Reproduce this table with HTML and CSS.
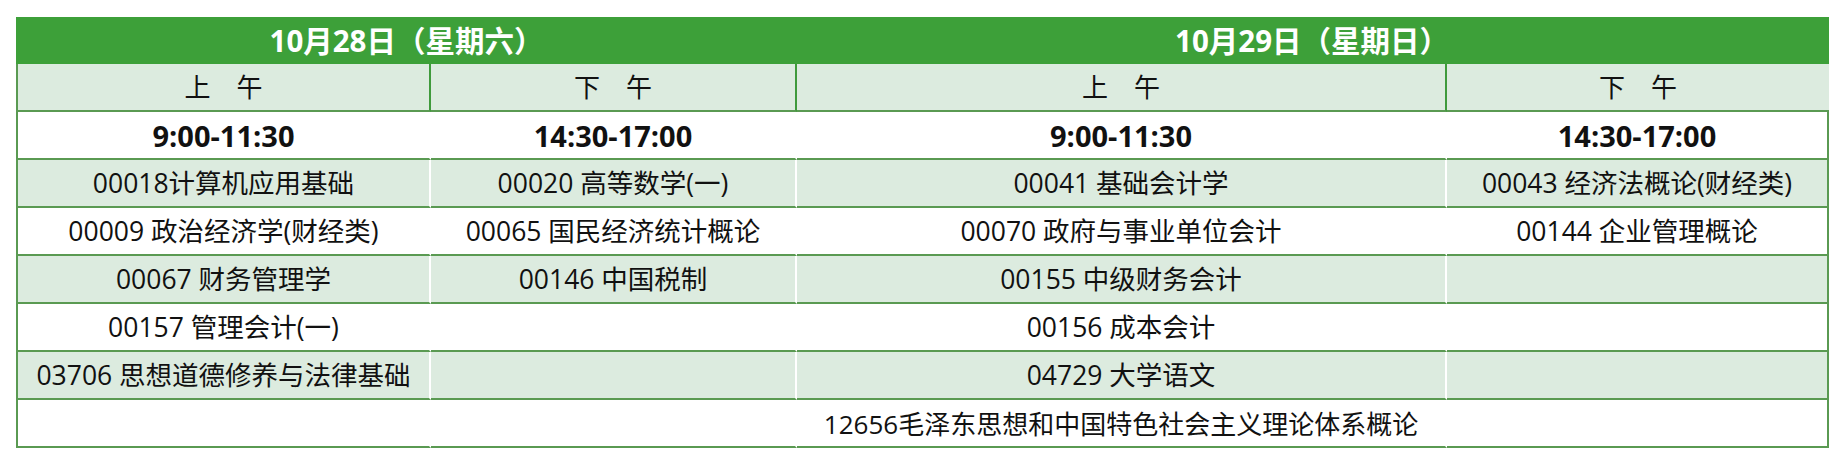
FILE: index.html
```html
<!DOCTYPE html>
<html lang="zh-CN">
<head>
<meta charset="utf-8">
<title>考试安排</title>
<link rel="stylesheet" href="styles.css">
</head>
<body>
<table class="sched">
  <colgroup>
    <col class="c1"><col class="c2"><col class="c3"><col class="c4">
  </colgroup>
  <tr class="day">
    <th colspan="2">10月28日（星期六）</th>
    <th colspan="2">10月29日（星期日）</th>
  </tr>
  <tr class="half">
    <td>上　午</td><td>下　午</td><td>上　午</td><td class="last">下　午</td>
  </tr>
  <tr class="time">
    <td>9:00-11:30</td><td>14:30-17:00</td><td>9:00-11:30</td><td class="last">14:30-17:00</td>
  </tr>
  <tr class="row alt">
    <td>00018计算机应用基础</td><td>00020 高等数学(一)</td><td>00041 基础会计学</td><td class="last">00043 经济法概论(财经类)</td>
  </tr>
  <tr class="row">
    <td>00009 政治经济学(财经类)</td><td>00065 国民经济统计概论</td><td>00070 政府与事业单位会计</td><td class="last">00144 企业管理概论</td>
  </tr>
  <tr class="row alt">
    <td>00067 财务管理学</td><td>00146 中国税制</td><td>00155 中级财务会计</td><td class="last"></td>
  </tr>
  <tr class="row">
    <td>00157 管理会计(一)</td><td></td><td>00156 成本会计</td><td class="last"></td>
  </tr>
  <tr class="row alt">
    <td>03706 思想道德修养与法律基础</td><td></td><td>04729 大学语文</td><td class="last"></td>
  </tr>
  <tr class="row">
    <td></td><td></td><td class="long">12656毛泽东思想和中国特色社会主义理论体系概论</td><td class="last"></td>
  </tr>
</table>
</body>
</html>
```

FILE: styles.css
```css
html, body {
  margin: 0;
  padding: 0;
  background: #ffffff;
}

body {
  padding: 17px 0 0 16px;
  font-family: "Open Sans", "Noto Sans CJK SC", sans-serif;
  color: #111111;
}

.sched {
  table-layout: fixed;
  width: 1813px;
  border-collapse: separate;
  border-spacing: 0;
}

.c1 { width: 415px; }
.c2 { width: 366px; }
.c3 { width: 650px; }
.c4 { width: 382px; }

.sched th,
.sched td {
  padding: 0;
  text-align: center;
  vertical-align: middle;
  white-space: nowrap;
  overflow: hidden;
  line-height: 1;
}

.day { height: 47px; }

.day th {
  background: #3da039;
  color: #ffffff;
  font-size: 29.5px;
  font-weight: 700;
  padding-right: 2px;
}

.day th:first-child {
  padding-right: 0;
}

.half { height: 48px; }

.half td {
  background: #dcebdf;
  font-size: 26px;
  font-weight: 400;
  border-bottom: 2px solid #5a9a52;
  border-right: 2px solid #3f9a3c;
}

.half td:first-child {
  border-left: 2px solid #5a9a52;
}

.half td.last {
  border-right: 0;
}

.time { height: 48px; }

.time td {
  background: #ffffff;
  font-size: 29px;
  font-weight: 700;
  border-bottom: 2px solid #5a9a52;
  border-right: 2px solid #ffffff;
}

.row { height: 48px; }

.row td {
  background: #ffffff;
  font-size: 26.5px;
  font-weight: 400;
  padding-top: 1px;
  border-bottom: 2px solid #5a9a52;
  border-right: 2px solid #ffffff;
}

.row td.long {
  font-size: 26px;
}

.row.alt td {
  background: #dcebdf;
}

.time td:first-child,
.row td:first-child {
  border-left: 2px solid #5a9a52;
}

.time td.last,
.row td.last,
.row.alt td.last {
  border-right: 2px solid #5a9a52;
}
```
